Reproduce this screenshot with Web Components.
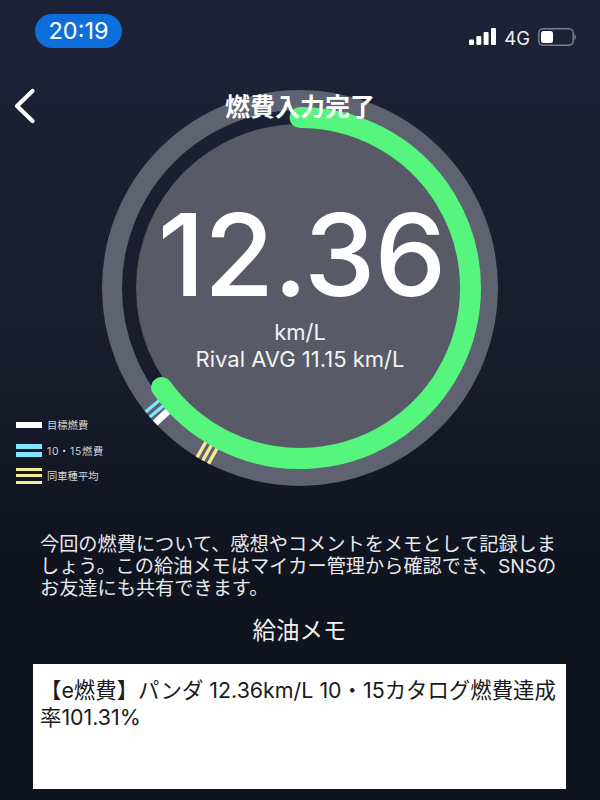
<!DOCTYPE html>
<html lang="ja">
<head>
<meta charset="utf-8">
<title>燃費入力完了</title>
<style>
  html, body { margin: 0; padding: 0; background: #10141f; }
</style>
</head>
<body>
<app-screen>
  <status-bar time="20:19" network="4G"></status-bar>
  <nav-header>燃費入力完了</nav-header>
  <fuel-gauge value="12.36" unit="km/L" rival="Rival AVG 11.15 km/L"></fuel-gauge>
  <memo-panel heading="給油メモ">
    <span slot="intro">今回の燃費について、感想やコメントをメモとして記録しま<br>しょう。この給油メモはマイカー管理から確認でき、SNSの<br>お友達にも共有できます。</span>
    【e燃費】パンダ 12.36km/L 10・15カタログ燃費達成率101.31%
  </memo-panel>
</app-screen>

<script>
class AppScreen extends HTMLElement {
  connectedCallback() {
    if (this.shadowRoot) return;
    const shadow = this.attachShadow({ mode: 'open' });
    shadow.innerHTML = `
      <style>
        :host {
          display: flex;
          flex-direction: column;
          width: 600px;
          height: 800px;
          overflow: hidden;
          color: #fff;
          background: linear-gradient(180deg, #1e2238 0%, #181c2c 45%, #10141f 70%, #10141f 100%);
          font-family: Inter, "Noto Sans CJK JP", sans-serif;
        }
      </style>
      <slot></slot>
    `;
  }
}

class StatusBar extends HTMLElement {
  connectedCallback() {
    if (this.shadowRoot) return;
    const shadow = this.attachShadow({ mode: 'open' });
    const time = this.getAttribute('time');
    const network = this.getAttribute('network');
    shadow.innerHTML = `
      <style>
        :host {
          display: flex;
          justify-content: space-between;
          align-items: flex-start;
          height: 76px;
          box-sizing: border-box;
          padding: 14px 23px 0 35px;
        }
        .time {
          width: 87px;
          height: 34px;
          border-radius: 17px;
          background: #0e6fdc;
          font-size: 23.5px;
          line-height: 34px;
          text-align: center;
        }
        .right {
          display: flex;
          align-items: center;
          margin-top: 14px;
          height: 18px;
        }
        .net {
          font-size: 18.5px;
          line-height: 18px;
          margin: 1px 8px 0 8px;
          color: #eceef2;
        }
        svg { display: block; }
      </style>
      <div class="time">${time}</div>
      <div class="right">
        <svg width="27" height="18" viewBox="0 0 27 18" fill="#fff">
          <rect x="0" y="11.5" width="5" height="5.5" rx="1"/>
          <rect x="7.3" y="8" width="5" height="9" rx="1"/>
          <rect x="14.6" y="4" width="5" height="13" rx="1"/>
          <rect x="22" y="0" width="5" height="17" rx="1"/>
        </svg>
        <span class="net">${network}</span>
        <svg width="39" height="18" viewBox="0 0 39 18">
          <rect x="0.75" y="0.75" width="34.5" height="16.5" rx="4.5" fill="none" stroke="#7b7e8c" stroke-width="1.5"/>
          <rect x="3" y="3" width="12" height="12" rx="2.5" fill="#fff"/>
          <path d="M36.5 6 C38.4 6.6 38.4 11.4 36.5 12 Z" fill="#7b7e8c"/>
        </svg>
      </div>
    `;
  }
}

class NavHeader extends HTMLElement {
  connectedCallback() {
    if (this.shadowRoot) return;
    const shadow = this.attachShadow({ mode: 'open' });
    shadow.innerHTML = `
      <style>
        :host {
          display: grid;
          grid-template-columns: 60px 1fr 60px;
          align-items: center;
          height: 60px;
          position: relative;
          z-index: 1;
        }
        svg { display: block; margin-left: 13px; }
        .title {
          text-align: center;
          font-size: 25px;
          font-weight: 700;
          line-height: 36px;
          padding-top: 1px;
        }
      </style>
      <svg width="24" height="36" viewBox="0 0 24 36" fill="none" stroke="#fff" stroke-width="4.2" stroke-linecap="round" stroke-linejoin="round">
        <path d="M19.5 3 L4 18 L19.5 33"/>
      </svg>
      <div class="title"><slot></slot></div>
      <div></div>
    `;
  }
}

class GaugeLegend extends HTMLElement {
  connectedCallback() {
    if (this.shadowRoot) return;
    const shadow = this.attachShadow({ mode: 'open' });
    shadow.innerHTML = `
      <style>
        :host {
          display: grid;
          grid-auto-rows: 25.5px;
          font-size: 10.3px;
          color: #d4d6da;
        }
        .row { display: flex; align-items: center; gap: 5px; }
        .wide { letter-spacing: 0.7px; }
        .swatch { display: flex; flex-direction: column; width: 26px; }
        .white i { height: 5.5px; background: #fff; }
        .cyan { gap: 3px; }
        .cyan i { height: 5px; background: #7fe6fb; }
        .yellow { gap: 3.5px; }
        .yellow i { height: 3px; background: #f5ec90; }
        i { display: block; }
      </style>
      <div class="row"><div class="swatch white"><i></i></div>目標燃費</div>
      <div class="row wide"><div class="swatch cyan"><i></i><i></i></div>10・15燃費</div>
      <div class="row"><div class="swatch yellow"><i></i><i></i><i></i></div>同車種平均</div>
    `;
  }
}

class FuelGauge extends HTMLElement {
  connectedCallback() {
    if (this.shadowRoot) return;
    const shadow = this.attachShadow({ mode: 'open' });
    // angles are clockwise from the top of the ring
    const polar = (r, deg) => {
      const a = deg * Math.PI / 180;
      return `${(200 + r * Math.sin(a)).toFixed(2)} ${(200 - r * Math.cos(a)).toFixed(2)}`;
    };
    const tick = (deg, offsets, width, color) => offsets.map(o =>
      `<line x1="${200 + o}" y1="21" x2="${200 + o}" y2="2" stroke="${color}" stroke-width="${width}" transform="rotate(${deg} 200 200)"/>`
    ).join('');

    shadow.innerHTML = `
      <style>
        :host {
          display: grid;
          position: relative;
          justify-items: center;
          margin-top: -48px;
          height: 400px;
        }
        svg, .readout { grid-area: 1 / 1; }
        svg { display: block; }
        .readout {
          display: flex;
          flex-direction: column;
          align-items: center;
          padding-top: 109px;
        }
        .value {
          font-size: 114px;
          line-height: 115px;
          font-weight: 500;
          letter-spacing: -1px;
          padding-left: 3px;
        }
        .unit {
          margin-top: 7px;
          font-size: 22px;
          line-height: 27px;
          color: #f2f3f5;
        }
        gauge-legend { position: absolute; left: 16px; top: 324px; }
      </style>
      <svg width="400" height="400" viewBox="0 0 400 400" fill="none">
        <circle cx="200" cy="200" r="188" stroke="#5f6270" stroke-width="20"/>
        <circle cx="200" cy="200" r="164" fill="#585b67"/>
        ${tick(230.3, [-3.3, 3.3], 3.3, '#7fe6fb')}
        ${tick(227, [0], 7, '#fff')}
        ${tick(209.4, [-6.5, 0, 6.5], 3.4, '#f5ec90')}
        <path d="M ${polar(170.5, 0)} A 170.5 170.5 0 1 1 ${polar(170.5, 234.3)}" stroke="#55f57e" stroke-width="21" stroke-linecap="round"/>
      </svg>
      <div class="readout">
        <div class="value">${this.getAttribute('value')}</div>
        <div class="unit">${this.getAttribute('unit')}</div>
        <div class="unit" style="margin-top:0">${this.getAttribute('rival')}</div>
      </div>
      <gauge-legend></gauge-legend>
    `;
  }
}

class MemoPanel extends HTMLElement {
  connectedCallback() {
    if (this.shadowRoot) return;
    const shadow = this.attachShadow({ mode: 'open' });
    shadow.innerHTML = `
      <style>
        :host {
          display: flex;
          flex-direction: column;
          padding: 45px 34px 0 33px;
        }
        .intro {
          padding-left: 7px;
          font-size: 19.2px;
          line-height: 22px;
          color: #e8e9ec;
          white-space: nowrap;
        }
        h2 {
          margin: 17px 0 18px;
          font-size: 23.5px;
          line-height: 30px;
          font-weight: 400;
          text-align: center;
          color: #eff0f2;
        }
        .box {
          height: 125px;
          box-sizing: border-box;
          padding: 13px 7px 0;
          background: #fff;
          color: #1a1a1a;
          font-size: 21.4px;
          line-height: 27px;
        }
      </style>
      <div class="intro"><slot name="intro"></slot></div>
      <h2>${this.getAttribute('heading')}</h2>
      <div class="box"><slot></slot></div>
    `;
  }
}

customElements.define('app-screen', AppScreen);
customElements.define('status-bar', StatusBar);
customElements.define('nav-header', NavHeader);
customElements.define('gauge-legend', GaugeLegend);
customElements.define('fuel-gauge', FuelGauge);
customElements.define('memo-panel', MemoPanel);
</script>
</body>
</html>
